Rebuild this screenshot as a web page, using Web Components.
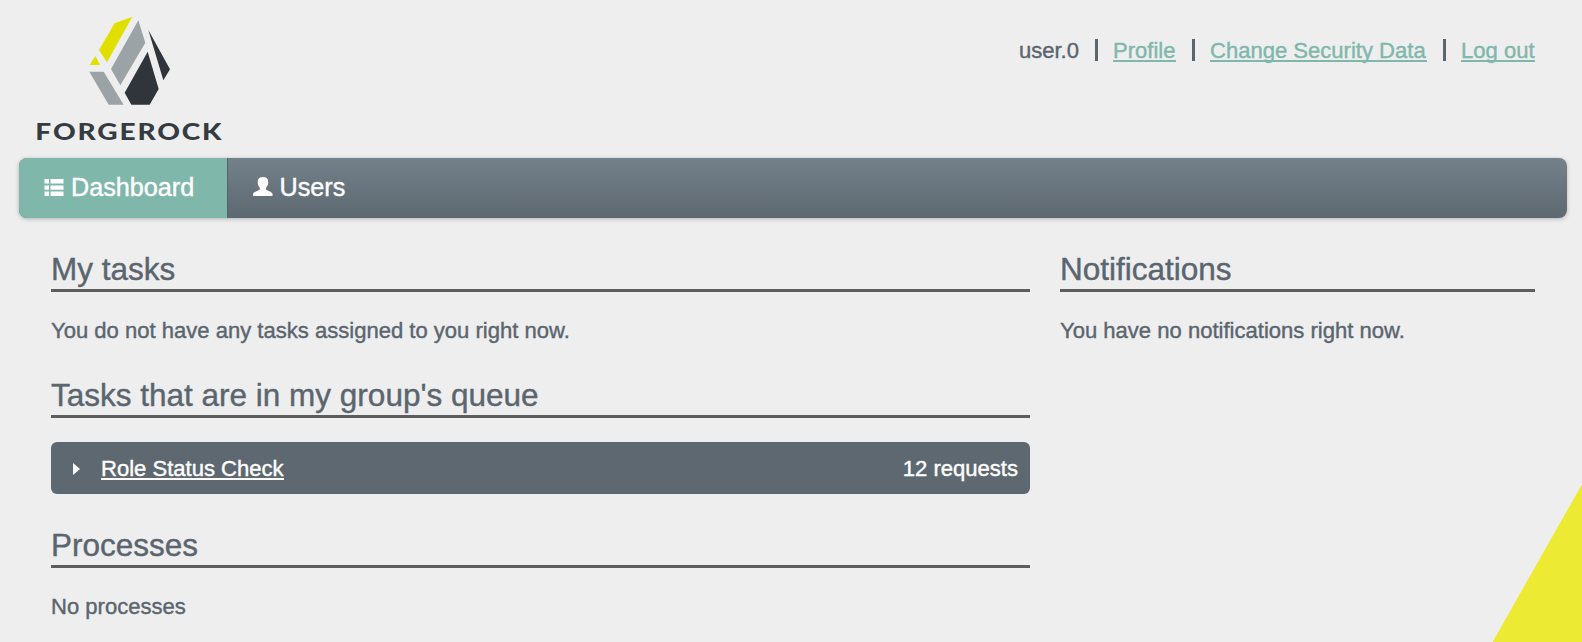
<!DOCTYPE html>
<html lang="en">
<head>
<meta charset="utf-8">
<title>Dashboard</title>
<style>
html,body{margin:0;height:100%;overflow:hidden}
body{background:#eee;color:#5a656e;font:22.06px/25px "Liberation Sans",Arial,sans-serif;-webkit-text-stroke:.4px currentColor}
</style>
</head>
<body>
<app-shell>
  <app-header slot="header">
    <forge-logo slot="logo"></forge-logo>
    <user-link plain>user.0</user-link>
    <user-link style="--w:63px">Profile</user-link>
    <user-link style="--w:217px">Change Security Data</user-link>
    <user-link style="--w:74px">Log out</user-link>
  </app-header>
  <nav-bar slot="nav">
    <nav-tab active icon="list">Dashboard</nav-tab>
    <nav-tab icon="user">Users</nav-tab>
  </nav-bar>
  <main-column slot="main">
    <dash-section heading="My tasks">You do not have any tasks assigned to you right now.</dash-section>
    <dash-section heading="Tasks that are in my group's queue" panel><task-row count="12 requests">Role Status Check</task-row></dash-section>
    <dash-section heading="Processes">No processes</dash-section>
  </main-column>
  <dash-section slot="side" heading="Notifications">You have no notifications right now.</dash-section>
</app-shell>
<script>
const define = (name, html, setup) => customElements.define(name, class extends HTMLElement {
  constructor() {
    super();
    const t = document.createElement('template');
    t.innerHTML = html;
    this.attachShadow({mode: 'open'}).append(t.content.cloneNode(true));
  }
  connectedCallback() { if (setup) setup(this, this.shadowRoot); }
});

define('app-shell', `<style>
:host{display:block;position:relative;height:642px;overflow:hidden}
.grid{display:grid;grid-template-columns:979px 475px;column-gap:30px;padding:33px 47px 0 51px;align-items:start}
.corner{position:absolute;right:0;bottom:0;width:90px;height:158px;display:block}
</style>
<svg class="corner" viewBox="0 0 90 158"><path d="M.6 158 90 .3V158Z" fill="#ecea32"/></svg>
<slot name="header"></slot><slot name="nav"></slot>
<div class="grid"><slot name="main"></slot><slot name="side"></slot></div>`);

define('app-header', `<style>
:host{display:flex;justify-content:space-between;height:158px;padding:0 47px 0 20px;box-sizing:border-box}
nav{display:flex;padding-top:38px;height:25px}
</style><slot name="logo"></slot><nav><slot></slot></nav>`);

define('forge-logo', `<style>:host{display:block;width:220px;height:150px}svg{display:block}
text{font-family:Lato,sans-serif;font-weight:900;-webkit-text-stroke:0}</style>
<svg width="220" height="150" viewBox="0 0 660 450">
<path fill="#e0df00" d="M337 50 284 70 237 150 261 187ZM226 168 209 195H240Z"/>
<path fill="#9ba3a6" d="M355 61 273 207 301 256 376 128ZM208 215H251L311 314H266Z"/>
<path fill="#2f353a" d="M385 90 450 208 430 241ZM383 155 416 267 389 314H334L314 278Z"/>
<text transform="translate(46 419) scale(1.22 1)" font-size="69" fill="#343c41" textLength="458">FORGEROCK</text>
</svg>`);

define('user-link', `<style>
:host{display:flex;white-space:nowrap}
a{color:#80b7ab;border-bottom:2px solid #80b7ab;height:22px;width:var(--w);line-height:25px}
:host(:not([plain]))::before{content:"";width:3px;height:22px;margin:1px 15px 0 16px;background:#5a656e}
:host([plain]) a{color:#5a656e;border:0}
</style><a><slot></slot></a>`);

define('nav-bar', `<style>
:host{display:flex;height:60px;margin:0 15px 0 19px;border-radius:8px;overflow:hidden;background:linear-gradient(#74818b,#5d6870);box-shadow:0 1px 4px rgba(0,0,0,.25)}
</style><slot></slot>`);

const icons = {
  list: '<path d="M.5 2h4.500v4.500H.5zM6.500 2h13v4.500h-13zM.5 8.500h4.500v4.200H.5zM6.500 8.500h13v4.200h-13zM.5 14.600h4.500v4.400H.5zM6.500 14.600h13v4.400h-13z"/>',
  user: '<path d="M10 0C6.500 0 4.700 1.700 4.700 5C4.700 7.800 5.700 9.600 6.800 10.800V12.300C6.300 13.800.5 14.800 0 16.800V19H19.500V16.800C19 14.800 13.500 13.800 13 12.300V10.800C14.200 9.600 15.200 7.800 15.200 5C15.200 1.700 13.500 0 10 0Z"/>'
};
define('nav-tab', `<style>
:host{display:flex;box-sizing:border-box;color:#fff;font-size:25.2px;line-height:30px;padding:14px 0 0 24.5px}
:host([active]){width:209px;background:#80b7ab;border-right:1px solid #56616a;padding-left:25px}
svg{width:20px;height:19px;margin:5px 7px 0 0;fill:#fff}
</style><svg viewBox="0 0 20 19"></svg><span><slot></slot></span>`,
(el, root) => { root.querySelector('svg').innerHTML = icons[el.getAttribute('icon')]; });

define('main-column', `<style>:host{display:flex;flex-direction:column;gap:33px}</style><slot></slot>`);

define('dash-section', `<style>
:host{display:block}
h2{margin:0 0 26px;font-size:31.5px;font-weight:400;line-height:36px;padding-bottom:2px;border-bottom:3px solid #5d5d5d}
:host([panel]) h2{margin-bottom:24px}
.body{min-height:25px}
:host(:first-child) .body{margin-bottom:1px}
</style><h2></h2><div class="body"><slot></slot></div>`,
(el, root) => { root.querySelector('h2').textContent = el.getAttribute('heading'); });

define('task-row', `<style>
:host{display:flex;box-sizing:border-box;height:52px;padding:14px 12px 0 22px;background:#5e6870;border-radius:6px;color:#fff}
svg{width:7px;height:12px;margin:7px 21px 0 0;fill:#fff}
a{border-bottom:2px solid #fff;height:22px;margin-right:auto}
</style><svg viewBox="0 0 7 12"><path d="M0 0 7 6 0 12Z"/></svg><a><slot></slot></a><span></span>`,
(el, root) => { root.querySelector('span').textContent = el.getAttribute('count'); });
</script>
</body>
</html>
